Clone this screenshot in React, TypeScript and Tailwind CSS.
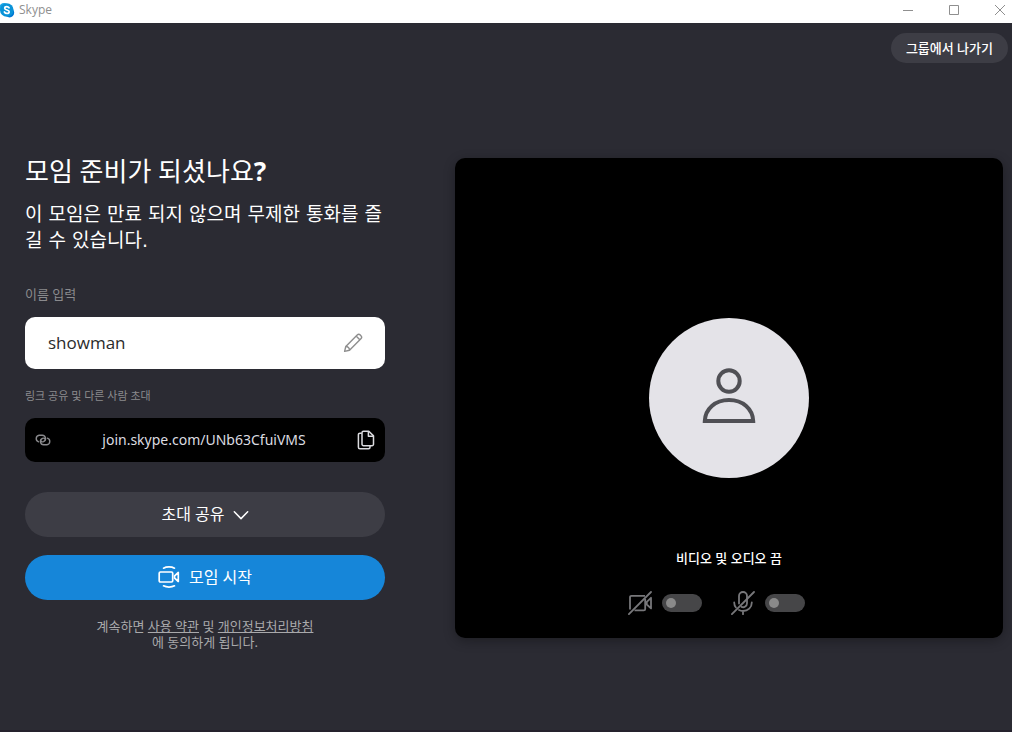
import { useState } from 'react'

type IconProps = {
  className?: string
}

type ToggleProps = {
  label: string
  checked: boolean
  onChange: (checked: boolean) => void
}

const inviteLink = 'join.skype.com/UNb63CfuiVMS'

function SkypeLogo({ className }: IconProps) {
  return (
    <svg viewBox="0 0 16 16" className={className} aria-hidden="true">
      <circle cx="5" cy="5.5" r="4.6" fill="#1ba7e8" />
      <circle cx="10.6" cy="10.8" r="4.6" fill="#0078d4" />
      <circle cx="7.8" cy="8" r="6.8" fill="#0a93d8" />
      <path
        d="M10 5.8C9.5 5 8.8 4.6 7.8 4.6c-1.200 0-2.100.6-2.100 1.600 0 2.300 4.500 1.200 4.500 3.500 0 1.100-1 1.700-2.300 1.700-1.100 0-2-.5-2.500-1.400"
        fill="none"
        stroke="#fff"
        strokeWidth="1.7"
        strokeLinecap="round"
      />
    </svg>
  )
}

function PencilIcon({ className }: IconProps) {
  return (
    <svg viewBox="0 0 20 20" fill="none" stroke="currentColor" strokeWidth="1.4" strokeLinejoin="round" className={className} aria-hidden="true">
      <path d="M1.600 18.400l1.200-4.900L14.200 2.100a2.200 2.200 0 0 1 3.100 0l.6.6a2.200 2.200 0 0 1 0 3.100L6.500 17.200z" />
      <path d="M13.300 3.200l3.500 3.500M2.800 13.500c1.900-.2 3.900 1.800 3.700 3.700" />
    </svg>
  )
}

function ChainIcon({ className }: IconProps) {
  return (
    <svg viewBox="0 0 16 12" fill="none" stroke="currentColor" strokeWidth="1.4" strokeLinecap="round" className={className} aria-hidden="true">
      <path d="M3.600 7.800A3.400 3.400 0 0 1 4.100 1.200h3.200a3.400 3.400 0 0 1 1.200 6.500c-1.400.5-2.900-.2-2.900-1.500" />
      <path d="M12.400 4.200a3.400 3.400 0 0 1-.5 6.600H8.700A3.400 3.400 0 0 1 7.500 4.300c1.400-.5 2.900.2 2.900 1.500" />
    </svg>
  )
}

function CopyIcon({ className }: IconProps) {
  return (
    <svg viewBox="0 0 18 20" fill="none" stroke="currentColor" strokeWidth="1.500" strokeLinejoin="round" className={className} aria-hidden="true">
      <path d="M6.500 1.200h5.300l4.700 4.700v8.300a1.500 1.500 0 0 1-1.500 1.500H6.500A1.500 1.500 0 0 1 5 14.200V2.700a1.500 1.500 0 0 1 1.500-1.500z" />
      <path d="M11.400 1.400v4.900h4.900M4.800 3.200H2.900a1.500 1.500 0 0 0-1.500 1.500v12.600a1.500 1.500 0 0 0 1.500 1.500h8.600a1.500 1.500 0 0 0 1.500-1.500v-1.400" />
    </svg>
  )
}

function ChevronIcon({ className }: IconProps) {
  return (
    <svg viewBox="0 0 16 10" fill="none" stroke="currentColor" strokeWidth="1.500" strokeLinecap="round" strokeLinejoin="round" className={className} aria-hidden="true">
      <path d="M1.300 1.800L8 8.600l6.700-6.800" />
    </svg>
  )
}

function MeetIcon({ className }: IconProps) {
  return (
    <svg viewBox="0 0 22 22" fill="none" stroke="currentColor" strokeWidth="1.700" strokeLinejoin="round" className={className} aria-hidden="true">
      <rect x="1.200" y="6" width="13.500" height="10" rx="1.200" />
      <path d="M20.300 6.500v9L16.600 12.200v-2.400z" />
      <path d="M5.500 2.200c3-1.700 8-1.700 11 0M5.500 19.800c3 1.700 8 1.700 11 0" strokeLinecap="round" />
    </svg>
  )
}

function CameraOffIcon({ className }: IconProps) {
  return (
    <svg viewBox="0 0 24 24" fill="none" stroke="currentColor" strokeWidth="1.800" strokeLinejoin="round" className={className} aria-hidden="true">
      <path d="M2 18.500V6.200a1.400 1.400 0 0 1 1.400-1.400h13.600M17.200 8v10a1.400 1.400 0 0 1-1.400 1.400H6.500" />
      <path d="M23 6.800v10.600L18.800 13.500v-2.600z" />
      <path d="M.9 23.100L23 1" strokeLinecap="round" />
    </svg>
  )
}

function MicOffIcon({ className }: IconProps) {
  return (
    <svg viewBox="0 0 24 24" fill="none" stroke="currentColor" strokeWidth="1.800" strokeLinecap="round" className={className} aria-hidden="true">
      <path d="M8 12.500V5a4 4 0 0 1 8 0v7.200a4 4 0 0 1-5.500 3.700" />
      <path d="M3.200 11.500c0 2 .6 3.700 1.700 5M8 19c1.200.7 2.500 1 4 1 5 0 8.800-3.500 8.800-8.500M12 20v3.200" />
      <path d="M.9 23.100L23 1" />
    </svg>
  )
}

function PersonIcon({ className }: IconProps) {
  return (
    <svg viewBox="0 0 54 56" fill="none" stroke="currentColor" strokeWidth="4" className={className} aria-hidden="true">
      <circle cx="27" cy="13" r="10.700" />
      <path d="M2.800 53C3.300 41 13 32 27 32s23.700 9 24.200 21z" />
    </svg>
  )
}

function Toggle({ label, checked, onChange }: ToggleProps) {
  return (
    <input
      type="checkbox"
      role="switch"
      aria-label={label}
      checked={checked}
      onChange={(e) => onChange(e.target.checked)}
      className="h-[18px] w-10 cursor-pointer appearance-none rounded-full bg-[#464648] px-1 py-1 before:block before:size-[10px] before:rounded-full before:bg-[#8a8a8a] checked:bg-[#1686d9] checked:before:ml-auto checked:before:bg-white"
    />
  )
}

export default function App() {
  const [name, setName] = useState('showman')
  const [video, setVideo] = useState(false)
  const [audio, setAudio] = useState(false)

  function handleCopy() {
    navigator.clipboard?.writeText(`https://${inviteLink}`)
  }

  return (
    <div className="flex min-h-screen flex-col bg-[#2b2b33] font-['Noto_Sans','Noto_Sans_CJK_KR',sans-serif] text-white">
      <header className="flex h-[23px] items-center justify-between bg-white text-[#8f8f8f]">
        <div className="flex items-center gap-1 pb-1">
          <SkypeLogo className="-ml-px size-4" />
          <span className="font-['Open_Sans',sans-serif] text-xs leading-4">Skype</span>
        </div>
        <div className="flex items-center gap-[34px] pr-[6px] pb-1">
          <button type="button" aria-label="최소화">
            <svg viewBox="0 0 12 12" className="size-3" stroke="currentColor" fill="none">
              <path d="M1 6.500h10" />
            </svg>
          </button>
          <button type="button" aria-label="최대화">
            <svg viewBox="0 0 12 12" className="size-3" stroke="currentColor" fill="none">
              <path d="M1.500 1.500h9v9h-9z" />
            </svg>
          </button>
          <button type="button" aria-label="닫기">
            <svg viewBox="0 0 12 12" className="size-3" stroke="currentColor" fill="none">
              <path d="M1 1l10 10M11 1L1 11" />
            </svg>
          </button>
        </div>
      </header>

      <div className="flex justify-end pt-[10px] pr-1">
        <button type="button" className="h-[30px] rounded-full bg-[#3d3d45] px-[15px] text-[13px] leading-5 font-medium">
          그룹에서 나가기
        </button>
      </div>

      <main className="flex grow items-start gap-[70px] pt-[95px] pr-[9px] pl-[25px]">
        <section className="w-[360px] shrink-0">
          <h1 className="text-[26px] leading-[26px]">
            모임 준비가 되셨나요<span className="font-bold">?</span>
          </h1>
          <p className="mt-[17px] font-['DejaVu_Sans','Noto_Sans_CJK_KR',sans-serif] text-[19px] leading-[26px]">
            이 모임은 만료 되지 않으며 무제한 통화를 즐
            <br />
            길 수 있습니다.
          </p>

          <label htmlFor="name" className="mt-[31px] block text-[13px] leading-5 text-[#8a8a8d]">
            이름 입력
          </label>
          <div className="mt-[13px] flex h-[52px] items-center rounded-[10px] bg-white pr-[22px] pl-[23px]">
            <input
              id="name"
              value={name}
              onChange={(e) => setName(e.target.value)}
              className="min-w-0 grow font-['Open_Sans','Noto_Sans_CJK_KR',sans-serif] text-[17px] leading-6 text-[#2b2b2b] outline-none"
            />
            <PencilIcon className="size-5 text-[#8e8e8e]" />
          </div>

          <h2 className="mt-[18px] text-[11px] leading-[18px] text-[#8a8a8d]">링크 공유 및 다른 사람 초대</h2>
          <div className="mt-[13px] flex h-11 items-center rounded-[10px] bg-black px-[10px]">
            <ChainIcon className="h-3 w-4 text-[#8a8a8d]" />
            <span className="grow text-center text-[14px] leading-5 text-[#dcdce0]">{inviteLink}</span>
            <button type="button" aria-label="링크 복사" onClick={handleCopy} className="text-[#dcdce0]">
              <CopyIcon className="h-5 w-[18px]" />
            </button>
          </div>

          <button
            type="button"
            className="mt-[30px] flex h-[45px] w-full items-center justify-center gap-2 rounded-full bg-[#3d3d45] pb-px text-[16px] leading-6"
          >
            초대 공유
            <ChevronIcon className="mt-[2px] h-[10px] w-4" />
          </button>
          <button
            type="button"
            className="mt-[18px] flex h-[45px] w-full items-center justify-center gap-[9px] rounded-full bg-[#1686d9] pb-px text-[16px] leading-6"
          >
            <MeetIcon className="size-[22px]" />
            모임 시작
          </button>

          <p className="mt-[18px] text-center text-[13px] leading-4 text-[#a9a9ab]">
            계속하면{' '}
            <a href="#terms" className="underline">
              사용 약관
            </a>{' '}
            및{' '}
            <a href="#privacy" className="underline">
              개인정보처리방침
            </a>
            <br />에 동의하게 됩니다.
          </p>
        </section>

        <section className="flex h-[480px] min-w-0 grow flex-col items-center rounded-[10px] bg-black pt-40 shadow-[0_3px_12px_rgba(0,0,0,0.3)]">
          <div className="flex size-40 items-center justify-center rounded-full bg-[#e4e3e8]">
            <PersonIcon className="mb-1 h-14 w-[54px] text-[#505055]" />
          </div>
          <p className="mt-[70px] text-[13px] leading-5 font-medium">비디오 및 오디오 끔</p>
          <div className="mt-[23px] mr-[26px] flex items-center gap-[29px] text-[#77777a]">
            <div className="flex items-center gap-[10px]">
              <CameraOffIcon className="size-6" />
              <Toggle label="비디오" checked={video} onChange={setVideo} />
            </div>
            <div className="flex items-center gap-[10px]">
              <MicOffIcon className="size-6" />
              <Toggle label="오디오" checked={audio} onChange={setAudio} />
            </div>
          </div>
        </section>
      </main>
      <div className="h-0.5 bg-[#25222d]" />
    </div>
  )
}
